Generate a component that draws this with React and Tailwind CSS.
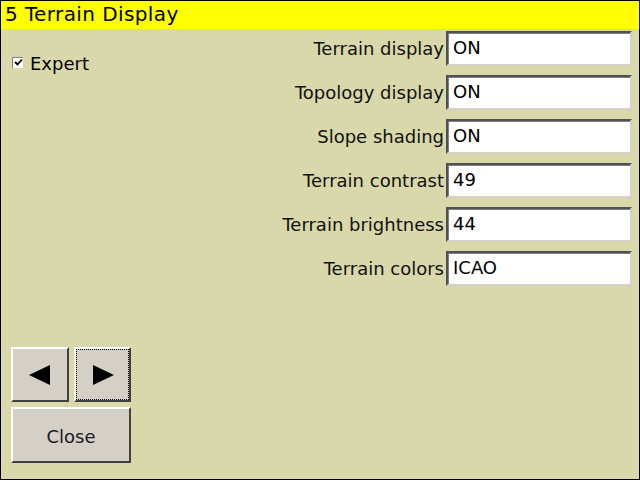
import React from 'react'

const ROWS = [
  { label: 'Terrain display', value: 'ON' },
  { label: 'Topology display', value: 'ON' },
  { label: 'Slope shading', value: 'ON' },
  { label: 'Terrain contrast', value: '49' },
  { label: 'Terrain brightness', value: '44' },
  { label: 'Terrain colors', value: 'ICAO' },
]

// sunken edit box, old win32 style
function Field({ value }) {
  return (
    <div className="w-[186px] h-[35px] border-t-2 border-l-2 border-t-[#505050] border-l-[#505050] border-b-2 border-r-2 border-b-[#d4d0c8] border-r-[#d4d0c8] bg-white">
      <div className="h-full border-t border-l border-t-[#808080] border-l-[#808080] flex items-center pl-[4px] pb-[3px] text-[18px] text-black">
        {value}
      </div>
    </div>
  )
}

function Button({ className = '', focused, children }) {
  return (
    <div className={`bg-[#d4d0c8] border-t-2 border-l-2 border-t-white border-l-white border-b-2 border-r-2 border-b-[#404040] border-r-[#404040] ${className}`}>
      <div className={`h-full w-full flex items-center justify-center ${focused ? 'border border-dotted border-black' : ''}`}>
        {children}
      </div>
    </div>
  )
}

export default function App() {
  return (
    <div
      className="w-[640px] h-[480px] flex flex-col bg-[#d8d8aa] border border-black text-black"
      style={{ fontFamily: '"DejaVu Sans", sans-serif' }}
    >
      <div className="h-[28px] bg-[#ffff00] flex items-center pl-[4px] text-[20px] tracking-[0.4px] leading-none pb-[2px]">
        5 Terrain Display
      </div>

      <div className="flex-1 flex">
        {/* left: expert toggle and nav buttons */}
        <div className="w-[150px] flex flex-col pl-[10px] pb-[16px]">
          <div className="flex items-center gap-[7px] mt-[21px] pl-[1px]">
            <span className="w-[11px] h-[11px] -mt-[3px] bg-white border-t border-l border-[#808080] border-b-white border-r-white flex items-center justify-center">
              <svg width="9" height="9" viewBox="0 0 9 9">
                <path d="M1 4 L3.5 6.5 L8 1.5" stroke="black" strokeWidth="1.8" fill="none" />
              </svg>
            </span>
            <span className="text-[18px]">Expert</span>
          </div>

          <div className="mt-auto flex flex-col gap-[5px]">
            <div className="flex gap-[5px]">
              <Button className="w-[58px] h-[55px]">
                <svg width="22" height="20" viewBox="0 0 22 20">
                  <path d="M0 10 L21 0 L21 20 Z" fill="black" />
                </svg>
              </Button>
              <Button className="w-[57px] h-[55px]" focused>
                <svg width="22" height="20" viewBox="0 0 22 20">
                  <path d="M1 0 L22 10 L1 20 Z" fill="black" />
                </svg>
              </Button>
            </div>
            <Button className="w-[120px] h-[56px]">
              <span className="text-[18px] text-[#1a1a1a] pt-[3px]">Close</span>
            </Button>
          </div>
        </div>

        {/* right: settings rows */}
        <div className="flex-1 flex flex-col items-end gap-[9px] pt-[2px] pr-[7px]">
          {ROWS.map((r) => (
            <div key={r.label} className="flex items-center gap-[2px]">
              <span className="text-[18px] text-[#111]">{r.label}</span>
              <Field value={r.value} />
            </div>
          ))}
        </div>
      </div>
    </div>
  )
}
